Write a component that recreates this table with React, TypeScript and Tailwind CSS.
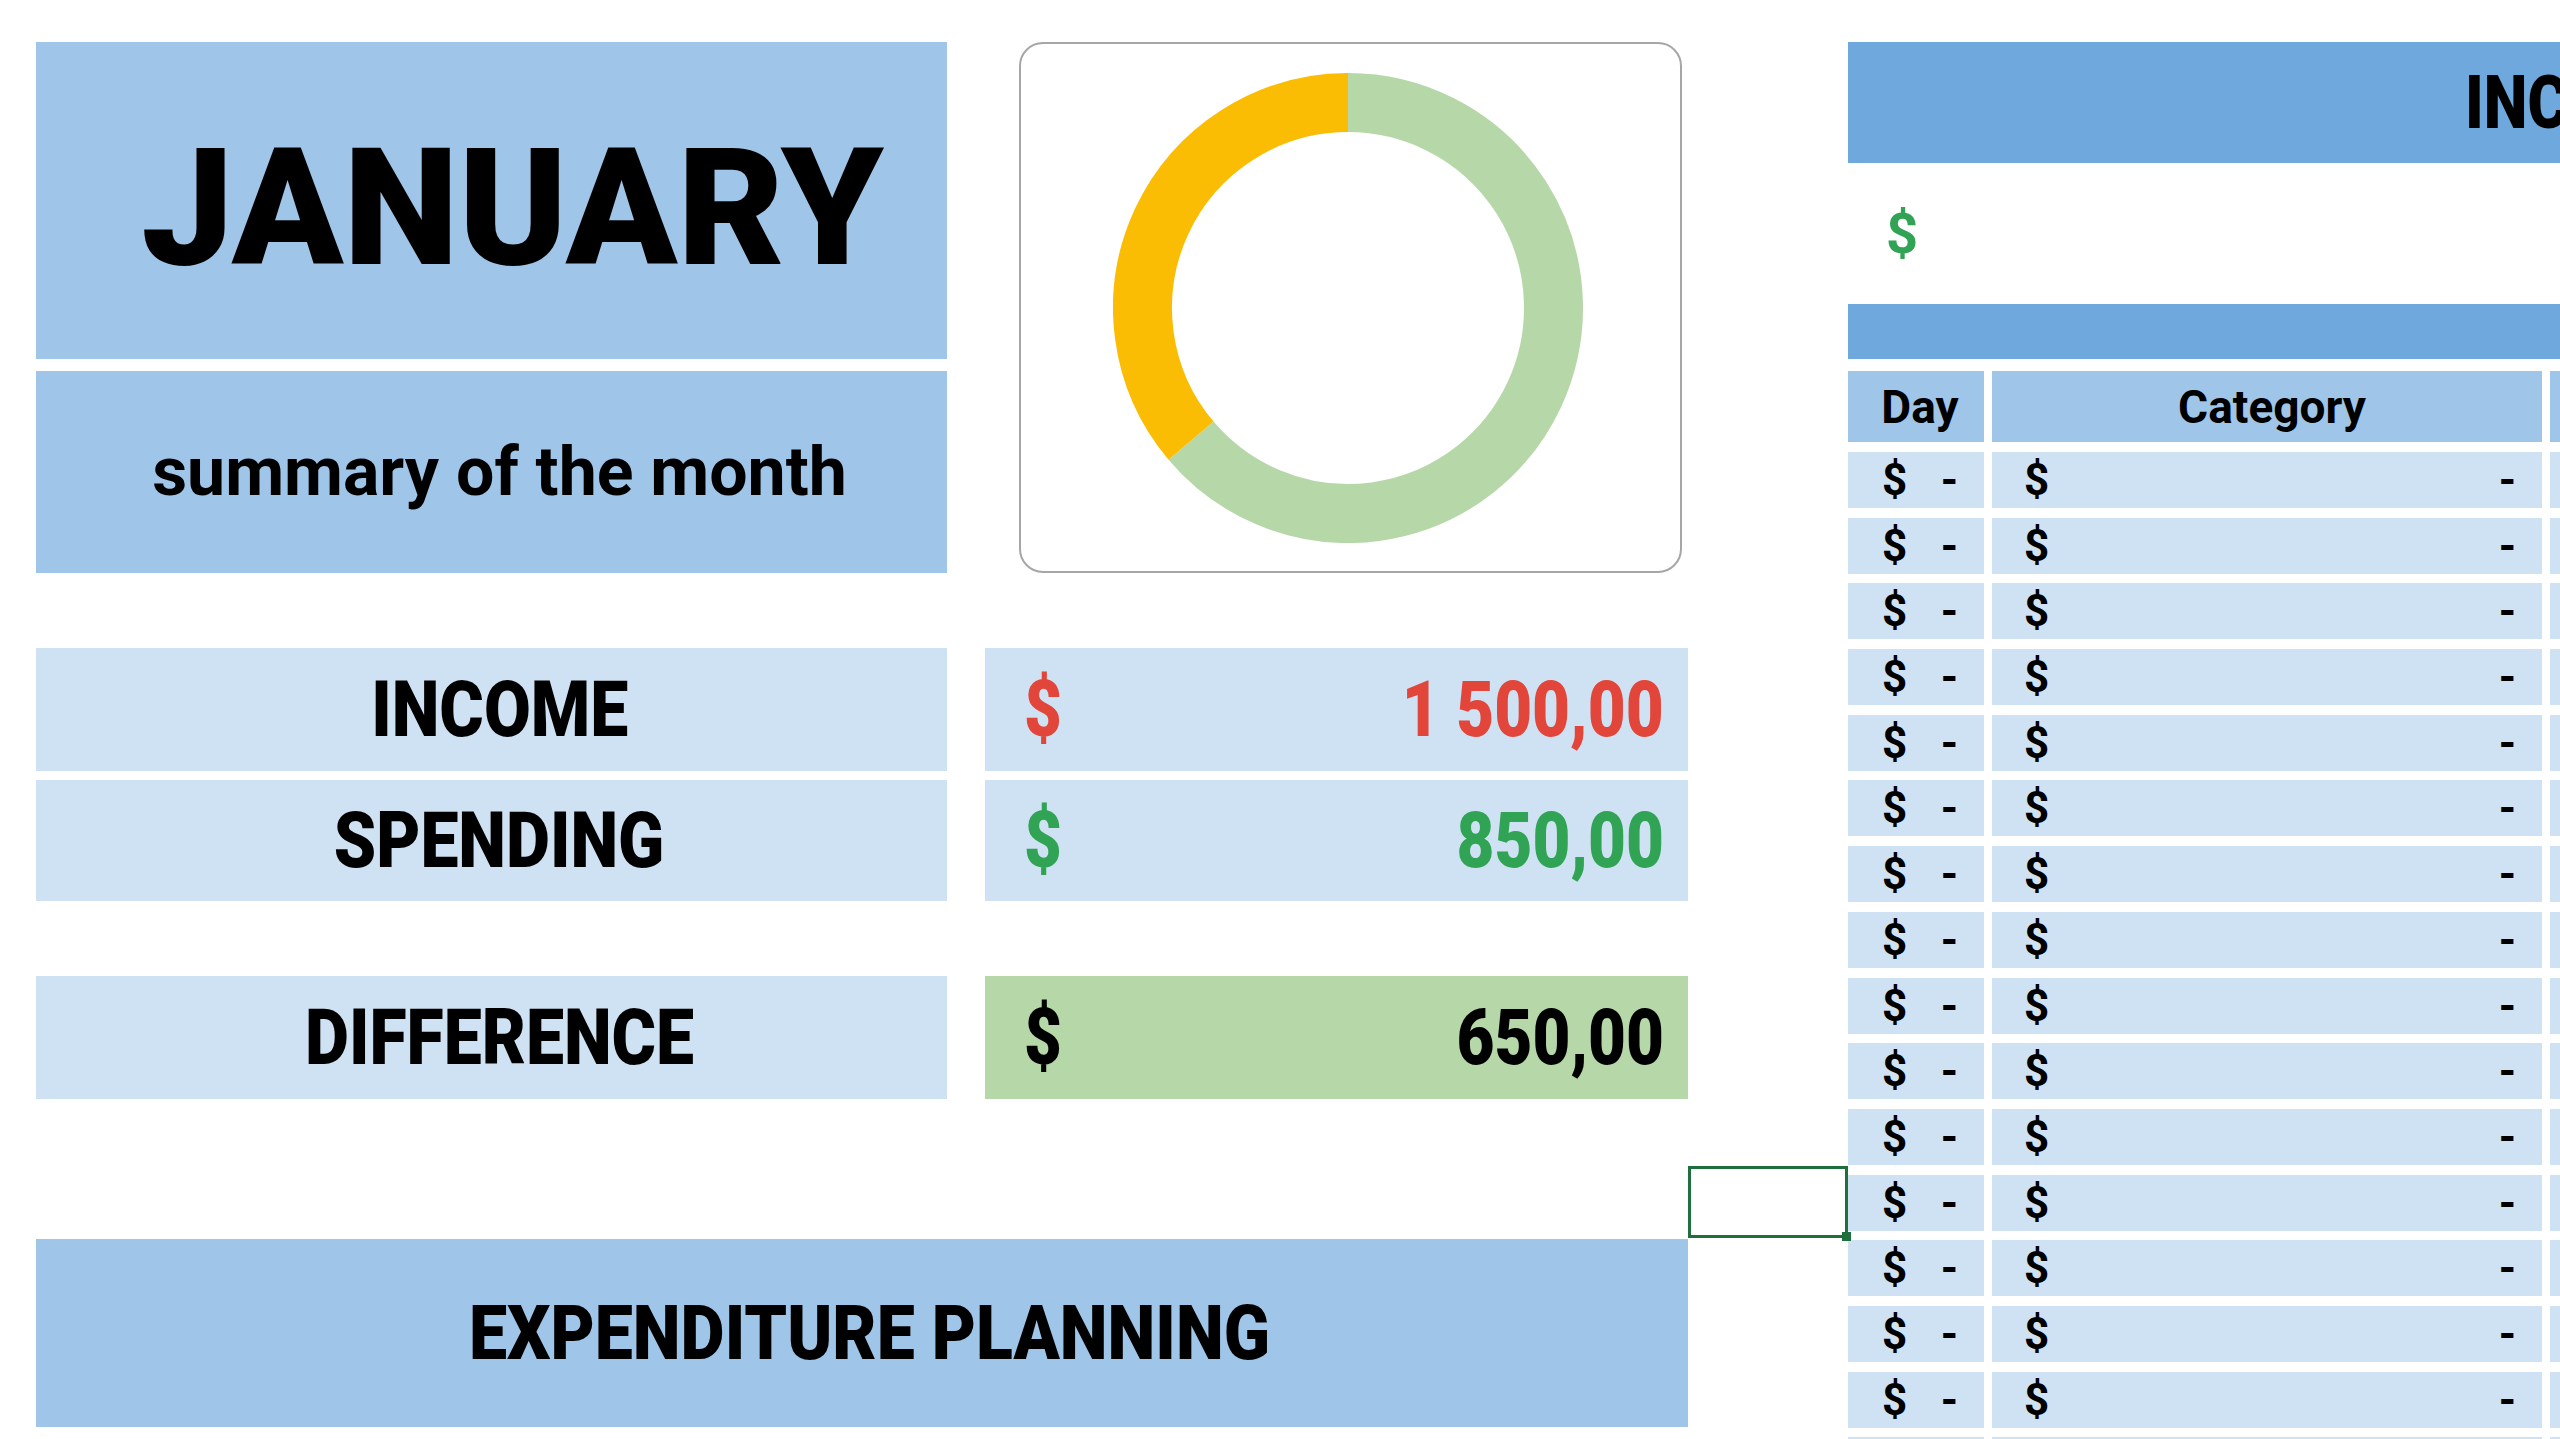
import React from 'react';

const rows = Array.from({ length: 16 }, (_, i) => i);

// income 1500 vs spending 850 -> spending arc ends at 229.8deg clockwise from top
function Donut() {
  return (
    <svg width="470" height="470" viewBox="0 0 470 470" className="-ml-[6px]">
      <path d="M235 29.5 A205.5 205.5 0 1 1 78.04 367.65" fill="none" stroke="#b6d7a8" strokeWidth="59" />
      <path d="M78.04 367.65 A205.5 205.5 0 0 1 235 29.5" fill="none" stroke="#fbbc04" strokeWidth="59" />
    </svg>
  );
}

interface SummaryRowProps {
  label: string;
  amount: string;
  height: string;
  signColor: string;
  valueBg: string;
}

function SummaryRow({ label, amount, height, signColor, valueBg }: SummaryRowProps) {
  return (
    <div className={`flex ${height}`}>
      <div className="flex w-[911px] shrink-0 items-center justify-center bg-[#cfe2f3] pl-[16px]">
        <span className="inline-block scale-x-[0.87] text-[78px] font-black leading-none">{label}</span>
      </div>
      <div className={`ml-[38px] flex w-[703px] shrink-0 items-center justify-between pl-[39px] pr-[24px] ${valueBg}`}>
        <span className={`inline-block origin-left scale-x-[0.84] text-[78px] font-black leading-none ${signColor}`}>$</span>
        <span className={`inline-block origin-right scale-x-[0.84] text-[78px] font-black leading-none ${signColor}`}>{amount}</span>
      </div>
    </div>
  );
}

export default function App() {
  return (
    <div className="flex h-[1439px] w-[2560px] overflow-hidden bg-white font-['Roboto',sans-serif] text-black">
      {/* Month summary */}
      <div className="flex w-[1848px] shrink-0 flex-col pl-[36px] pt-[42px]">
        <div className="flex h-[531px]">
          <div className="flex w-[911px] shrink-0 flex-col gap-[12px]">
            <div className="flex h-[317px] items-center justify-center bg-[#9fc5e8] pl-[42px] pt-[14px]">
              <span className="text-[164px] font-black leading-none">JANUARY</span>
            </div>
            <div className="flex flex-1 items-center justify-center bg-[#9fc5e8] pl-[16px]">
              <span className="text-[68px] font-bold leading-none">summary of the month</span>
            </div>
          </div>
          <div className="ml-[72px] flex w-[663px] shrink-0 items-center justify-center rounded-[24px] border-2 border-[#a6a6a6]">
            <Donut />
          </div>
        </div>

        <div className="mt-[75px] flex flex-col gap-[9px]">
          <SummaryRow label="INCOME" amount="1 500,00" height="h-[123px]" signColor="text-[#e2463a]" valueBg="bg-[#cfe2f3]" />
          <SummaryRow label="SPENDING" amount="850,00" height="h-[121px]" signColor="text-[#31a354]" valueBg="bg-[#cfe2f3]" />
        </div>

        <div className="mt-[75px]">
          <SummaryRow label="DIFFERENCE" amount="650,00" height="h-[123px]" signColor="text-black" valueBg="bg-[#b6d7a8]" />
        </div>

        {/* selected cell */}
        <div className="mt-[67px] flex h-[72px]">
          <div className="relative ml-[1652px] w-[160px] border-[3px] border-[#1e6e3e]">
            <div className="absolute -bottom-[6px] -right-[6px] h-[9px] w-[9px] bg-[#1e6e3e]" />
          </div>
        </div>

        <div className="mt-[1px] flex h-[188px] w-[1652px] items-center justify-center bg-[#9fc5e8] pl-[16px]">
          <span className="inline-block scale-x-[0.895] whitespace-nowrap text-[76px] font-black leading-none">EXPENDITURE PLANNING</span>
        </div>
      </div>

      {/* Income table */}
      <div className="flex min-w-0 flex-1 flex-col overflow-hidden pt-[42px]">
        <div className="flex h-[121px] w-[900px] shrink-0 items-center bg-[#6fa8dc] pl-[617px]">
          <span className="inline-block origin-left scale-x-[0.84] whitespace-nowrap text-[74px] font-black leading-none">INCOME</span>
        </div>
        <div className="flex h-[141px] shrink-0 items-center pl-[38px]">
          <span className="text-[56px] font-bold leading-none text-[#31a354]">$</span>
        </div>
        <div className="h-[55px] w-[900px] shrink-0 bg-[#6fa8dc]" />

        <div className="mt-[12px] flex h-[71px] shrink-0 gap-[8px]">
          <div className="flex w-[136px] shrink-0 items-center justify-center bg-[#9fc5e8] pl-[8px]">
            <span className="text-[46px] font-bold leading-none">Day</span>
          </div>
          <div className="flex w-[550px] shrink-0 items-center justify-center bg-[#9fc5e8] pl-[10px]">
            <span className="text-[46px] font-bold leading-none">Category</span>
          </div>
          <div className="w-[200px] shrink-0 bg-[#9fc5e8]" />
        </div>

        <div className="mt-[10px] flex flex-col gap-[9.7px]">
          {rows.map(r => (
            <div key={r} className="flex h-[56px] shrink-0 gap-[8px] text-[44px] font-bold leading-none">
              <div className="flex w-[136px] shrink-0 items-center justify-between bg-[#cfe2f3] pl-[34px] pr-[26px]">
                <span>$</span>
                <span>-</span>
              </div>
              <div className="flex w-[550px] shrink-0 items-center justify-between bg-[#cfe2f3] pl-[32px] pr-[26px]">
                <span>$</span>
                <span>-</span>
              </div>
              <div className="w-[200px] shrink-0 bg-[#cfe2f3]" />
            </div>
          ))}
        </div>
      </div>
    </div>
  );
}
